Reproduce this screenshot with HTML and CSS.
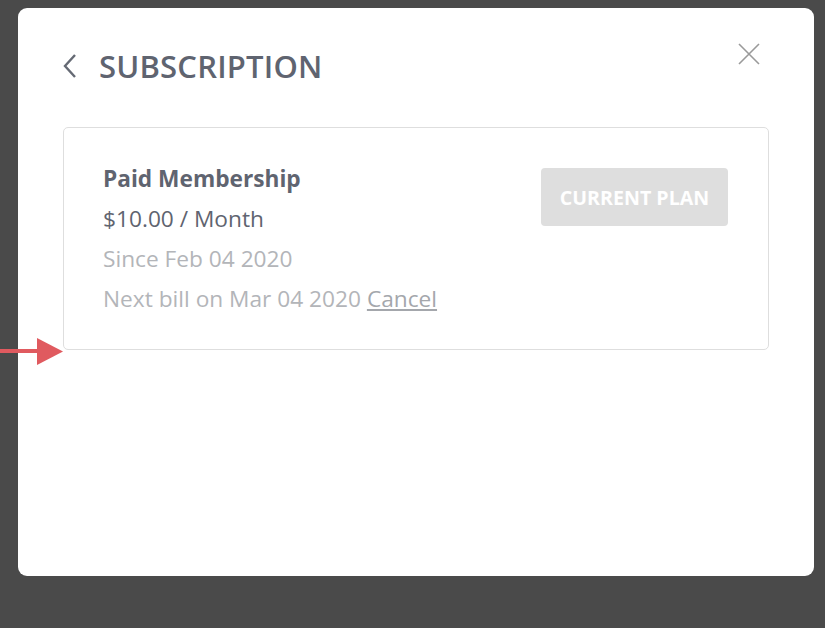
FILE: index.html
```html
<!DOCTYPE html>
<html lang="en">
<head>
    <meta charset="UTF-8">
    <meta name="viewport" content="width=device-width, initial-scale=1.0">
    <title>Subscription</title>
    <link rel="stylesheet" href="styles.css">
</head>
<body>

    <div class="modal">
        <!-- Header -->
        <div class="modal-header">
            <button class="back-btn" aria-label="Back">
                <svg width="16" height="26" viewBox="0 0 16 26">
                    <path d="M12 2 L2 13 L12 24" fill="none" stroke="#656a74" stroke-width="2.4"/>
                </svg>
            </button>
            <h2>SUBSCRIPTION</h2>
        </div>

        <button class="close-btn" aria-label="Close">
            <svg width="22" height="22" viewBox="0 0 22 22">
                <path d="M1 1 L21 21 M21 1 L1 21" fill="none" stroke="#9a9a9a" stroke-width="1.6"/>
            </svg>
        </button>

        <!-- Plan card -->
        <div class="plan-card">
            <div class="plan-info">
                <h4>Paid Membership</h4>
                <p class="price">$10.00 / Month</p>
                <p class="muted">Since Feb 04 2020</p>
                <p class="muted">Next bill on Mar 04 2020 <a href="#">Cancel</a></p>
            </div>
            <button class="plan-btn" disabled>CURRENT PLAN</button>
        </div>
    </div>

    <!-- annotation arrow -->
    <svg class="pointer" width="64" height="28" viewBox="0 0 64 28">
        <rect x="0" y="11" width="40" height="4" fill="#e05a5f"/>
        <polygon points="37,0 63,13.5 37,27" fill="#e05a5f"/>
    </svg>

</body>
</html>
```

FILE: styles.css
```css
body {
    margin: 0;
    background-color: #4a4a4a;
    font-family: "Open Sans", Arial, sans-serif;
    height: 628px;
    overflow: hidden;
}

.modal {
    position: relative;
    box-sizing: border-box;
    width: 796px;
    height: 568px;
    margin: 8px 0 0 18px;
    padding: 38px 45px;
    background-color: #fff;
    border-radius: 9px;
}

.modal-header {
    display: flex;
    align-items: center;
    gap: 20px;
    height: 40px;
}

.modal-header h2 {
    margin: 0;
    font-size: 31px;
    font-weight: 600;
    color: #5f6470;
    letter-spacing: 0.2px;
}

.back-btn, .close-btn {
    padding: 0;
    border: none;
    background: none;
    cursor: pointer;
    display: flex;
}

.close-btn {
    position: absolute;
    top: 35px;
    right: 54px;
}

.plan-card {
    display: flex;
    justify-content: space-between;
    align-items: flex-start;
    margin-top: 41px;
    padding: 31px 40px 30px 39px;
    border: 1px solid #dedede;
    border-radius: 5px;
}

.plan-info h4,
.plan-info p {
    margin: 0;
    font-size: 22.7px;
    line-height: 40px;
}

.plan-info h4 {
    font-weight: 700;
    color: #5f6470;
}

.plan-info .price {
    color: #5f6470;
}

.plan-info .muted {
    color: #b3b5b9;
}

.plan-info a {
    color: #a4a7ac;
}

.plan-btn {
    margin-top: 9px;
    width: 187px;
    height: 58px;
    border: none;
    border-radius: 4px;
    background-color: #dedede;
    color: #fff;
    font-family: "Open Sans", Arial, sans-serif;
    font-size: 19.6px;
    font-weight: 700;
}

.pointer {
    position: absolute;
    left: 0;
    top: 338px;
}
```
